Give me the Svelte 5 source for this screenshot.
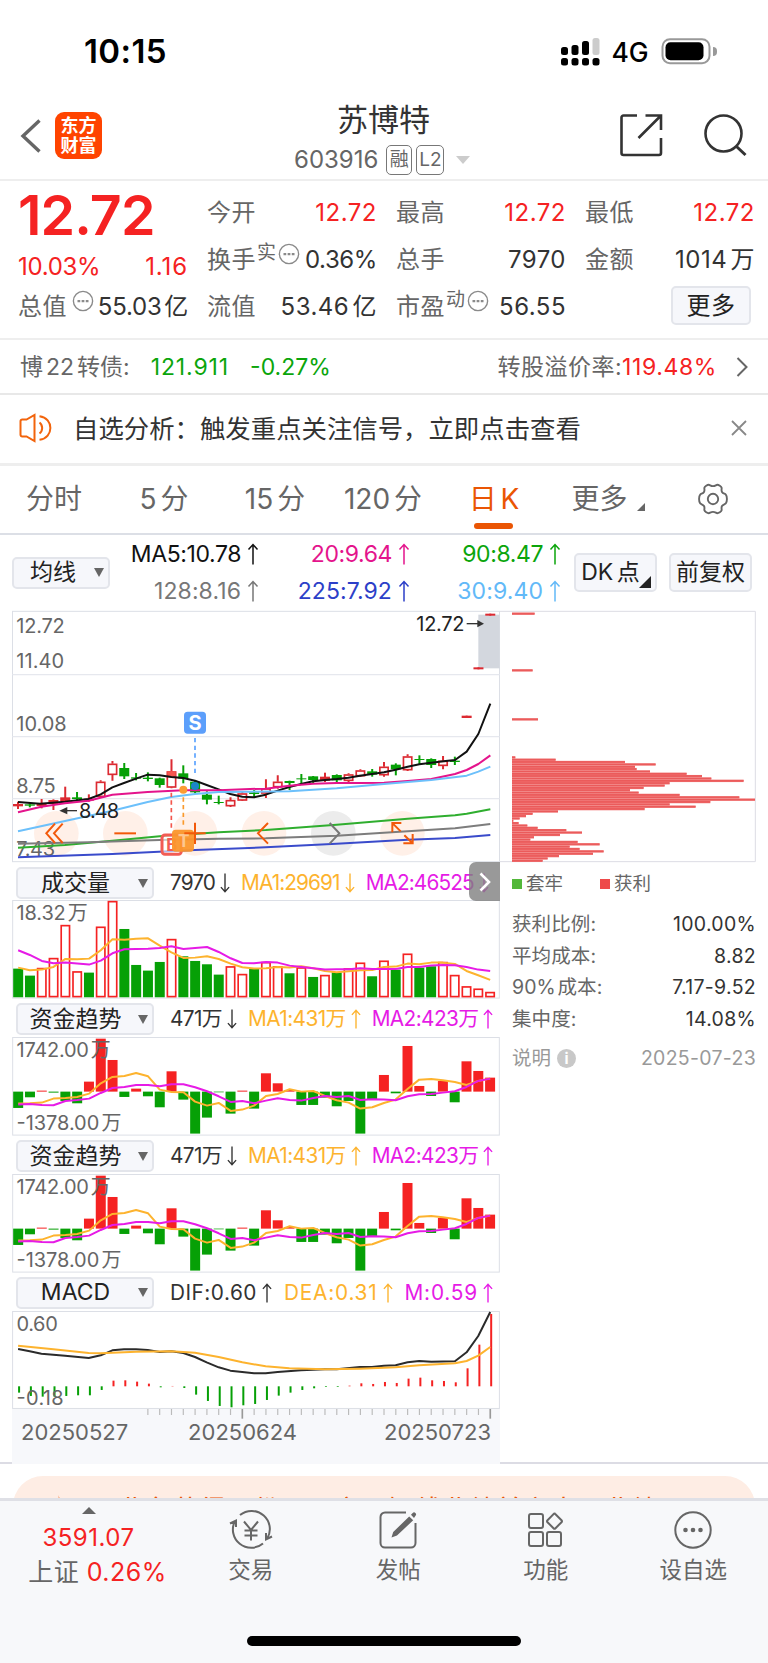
<script lang="ts">
  type Point = [number, number];
  type Candle = [kind: string, top: number, bottom: number, high: number, low: number];
  type Bar = [kind: string, y: number];

  // Charts are drawn in @3x units, one candle every STEP units
  const FIRST = 54;
  const STEP = 35.42;
  const at = (i: number) => FIRST + i * STEP;

  const path = (points: Point[]) => points.map((p) => p.join(',')).join(' ');

  // Series written as "y y y ...", one value per candle
  const series = (text: string): Point[] =>
    text.split(' ').map((y, i) => [Math.round(at(i)), Number(y)]);

  const parseBars = (text: string): Bar[] =>
    text.split(' ').map((item) => [item[0], Number(item.slice(1))]);

  const tabs = ['分时', '5 分', '15 分', '120 分', '日 K'];

  const averages = [
    { text: 'MA5:10.78', color: '#111' },
    { text: '20:9.64', color: '#e4148c' },
    { text: '90:8.47', color: '#0ba50b' },
    { text: '128:8.16', color: '#777' },
    { text: '225:7.92', color: '#2c3fc8' },
    { text: '30:9.40', color: '#62b9f8' }
  ];

  const candles: Candle[] = [
    ['s', 612, 619, 605, 627], ['g', 613, 617, 610, 622], ['s', 611, 618, 597, 625],
    ['s', 600, 612, 598, 630], ['s', 592, 603, 560, 606], ['g', 592, 597, 576, 600],
    ['s', 596, 602, 583, 605], ['r', 545, 590, 541, 592], ['r', 491, 524, 483, 542],
    ['g', 504, 529, 489, 537], ['g', 532, 536, 519, 541], ['g', 533, 537, 517, 544],
    ['g', 535, 555, 533, 563], ['r', 514, 562, 478, 565], ['g', 520, 536, 496, 550],
    ['g', 545, 577, 540, 580], ['g', 584, 599, 574, 613], ['g', 606, 609, 587, 613],
    ['r', 600, 618, 592, 621], ['r', 580, 601, 576, 603], ['g', 577, 582, 570, 592],
    ['r', 565, 580, 538, 594], ['r', 545, 561, 526, 566], ['g', 543, 549, 542, 570],
    ['g', 535, 538, 522, 552], ['g', 529, 540, 528, 552], ['s', 530, 542, 518, 546],
    ['g', 525, 541, 523, 546], ['r', 523, 542, 520, 551], ['r', 511, 528, 508, 530],
    ['g', 514, 524, 507, 530], ['r', 500, 525, 486, 530], ['g', 494, 508, 490, 526],
    ['r', 469, 510, 463, 513], ['g', 477, 480, 466, 493], ['g', 477, 495, 475, 504],
    ['r', 482, 497, 468, 508], ['g', 482, 486, 470, 495], ['s', 347, 354, 347, 354],
    ['s', 202, 208, 202, 208], ['s', 41, 47, 41, 47]
  ];

  const priceLines: { color: string; points: Point[] }[] = [
    { color: '#2fae2f', points: [[54, 743], [195, 735], [337, 722], [479, 709], [656, 697], [797, 690], [1010, 674], [1223, 656], [1365, 646], [1400, 641], [1471, 628]] },
    { color: '#7d7d7d', points: [[54, 731], [266, 727], [479, 720], [656, 716], [797, 715], [1010, 707], [1223, 694], [1365, 685], [1471, 672]] },
    { color: '#3a4bcb', points: [[54, 772], [337, 762], [585, 750], [797, 742], [1010, 731], [1223, 719], [1365, 714], [1471, 705]] },
    { color: '#111', points: [[54, 606], [120, 611], [195, 605], [266, 597], [302, 583], [337, 562], [372, 549], [408, 536], [443, 524], [479, 526], [514, 531], [550, 534], [585, 542], [620, 555], [656, 568], [691, 582], [727, 590], [762, 592], [797, 584], [833, 572], [868, 561], [903, 552], [939, 544], [975, 540], [1010, 537], [1045, 533], [1080, 527], [1116, 522], [1152, 517], [1187, 509], [1223, 500], [1258, 493], [1294, 488], [1330, 484], [1365, 480], [1400, 455], [1435, 402], [1471, 311]] },
    { color: '#e4148c', points: [[54, 637], [124, 620], [195, 610], [266, 602], [337, 584], [443, 576], [550, 571], [656, 571], [750, 567], [797, 566], [868, 557], [939, 551], [1010, 549], [1080, 549], [1152, 548], [1223, 543], [1294, 537], [1365, 522], [1400, 510], [1435, 492], [1471, 466]] },
    { color: '#6cc0fb', points: [[54, 694], [195, 663], [337, 632], [443, 606], [514, 591], [585, 582], [656, 576], [750, 575], [868, 574], [1010, 565], [1152, 552], [1294, 540], [1400, 527], [1435, 515], [1471, 500]] }
  ];

  const chipWidths = [
    46, 167, 375, 467, 405, 410, 450, 560, 606, 634, 731, 509, 494, 431, 390, 416, 539, 718, 765,
    631, 509, 587, 434, 174, 98, 78, 59, 40, 56, 82, 113, 199, 246, 180, 102, 91, 233, 299, 209,
    239, 311, 279, 177, 143, 128
  ];
  const chips: Point[] = [
    [41, 104],
    [211, 98],
    [358, 114],
    ...chipWidths.map((w, i): Point => [472 + i * 7.05, w])
  ];

  const chipStats = [
    ['获利比例:', '100.00%'],
    ['平均成本:', '8.82'],
    ['90% 成本:', '7.17-9.52'],
    ['集中度:', '14.08%']
  ];

  const volumeBars = parseBars(
    'g327 g348 r326 r296 r197 r336 g339 r202 r125 g208 g316 g333 g307 r239 g290 g304 g314 g345 r321 r344 g326 r308 r321 g341 r324 g352 r347 g338 r327 r310 g350 r304 g330 r283 g324 g320 r308 r347 r381 r388 r398'
  );
  const volumeMa1 = series(
    '324 332 330 322 298 299 297 272 239 240 237 236 258 278 295 294 290 298 312 323 327 326 322 324 320 326 334 338 335 332 331 322 321 312 314 309 309 313 334 347 361'
  );
  const volumeMa2 = series(
    '272 286 304 311 309 312 315 303 281 269 268 267 265 260 268 265 262 277 296 310 311 307 309 318 322 326 330 329 329 326 328 328 328 322 322 318 316 317 322 330 334'
  );

  const fundBars = parseBars(
    'g745 g713 r693 g699 g724 g731 r666 r537 r601 g712 r687 g710 g743 r635 g720 g822 g774 g698 g762 r693 g747 r641 r671 r691 g736 g736 g714 g740 g724 g822 g720 r646 g701 r559 r679 g709 r664 g728 r605 r634 r654'
  );
  const fundMa1 = series(
    '732 731 729 717 715 712 702 671 652 649 640 650 690 697 698 726 738 730 754 750 738 709 703 689 696 694 709 722 729 747 743 730 720 688 660 658 662 667 676 664 657'
  );
  const fundMa2 = series(
    '735 733 736 737 724 721 717 700 685 682 676 676 680 674 674 683 695 710 727 724 731 723 716 721 723 715 709 712 709 721 719 720 722 710 704 703 699 695 682 664 657'
  );

  const macdBars = parseBars(
    'g308 g318 g320 g320 g318 g316 g316 g300 r272 r271 r275 r281 g292 r288 g294 g314 g333 g348 g352 g346 g342 g330 g317 g308 g300 g295 g291 g291 r287 r280 r282 r276 r279 r266 r263 r271 r273 r277 r235 r164 r72'
  );
  const dif: Point[] = [[54, 177], [89, 184], [124, 191], [195, 197], [266, 204], [302, 196], [337, 181], [372, 178], [408, 178], [443, 180], [479, 186], [514, 184], [550, 189], [585, 201], [620, 217], [656, 232], [691, 242], [762, 250], [797, 250], [833, 246], [903, 241], [975, 238], [1010, 238], [1080, 231], [1116, 231], [1152, 227], [1187, 226], [1223, 217], [1258, 213], [1294, 215], [1365, 214], [1400, 187], [1435, 138], [1471, 66]];
  const dea: Point[] = [[54, 167], [160, 178], [266, 189], [302, 190], [408, 185], [514, 184], [585, 188], [656, 201], [727, 217], [797, 229], [868, 235], [975, 238], [1080, 236], [1187, 232], [1258, 226], [1365, 220], [1400, 213], [1435, 197], [1471, 171]];

  const ticks = Array.from({ length: 30 }, (_, i) => i + 11);

  const UP = '#f52222';
  const DOWN = '#06a006';
</script>

{#snippet arrow(down = false)}
  <svg class="arrow" class:down viewBox="0 0 12 22" width="12" height="22">
    <path d="M6 21.500V1.500M1.500 6.500L6 1.500l4.500 5" fill="none" stroke="currentColor" stroke-width="1.500" />
  </svg>
{/snippet}

{#snippet info()}
  <svg class="info" viewBox="0 0 24 24" width="22" height="22">
    <circle cx="12" cy="12" r="10.500" fill="none" stroke="#8a8a8a" stroke-width="1.500" />
    <path d="M6 11h3v2.400H6zM10.500 11h3v2.400h-3zM15 11h3v2.400h-3z" fill="#8a8a8a" />
  </svg>
{/snippet}

{#snippet fundPanel()}
  <div class="panel-head">
    <button class="select"><span>资金趋势</span><i></i></button>
    <span class="reading dark">471万{@render arrow(true)}</span>
    <span class="reading orange">MA1:431万{@render arrow()}</span>
    <span class="reading purple">MA2:423万{@render arrow()}</span>
  </div>
  <svg class="panel" viewBox="36 532 1464 296" width="488" height="98.600">
    <rect class="frame" x="37.500" y="533.500" width="1461" height="293" />
    {#each fundBars as [kind, y], i}
      <rect x={at(i) - 15} y={Math.min(y, 696)} width="30" height={Math.abs(696 - y)} fill={kind === 'r' ? UP : DOWN} />
    {/each}
    <text class="axis" x="49" y="591" textLength="283">1742.00 万</text>
    <text class="axis" x="49" y="812" textLength="315">-1378.00 万</text>
    <polyline class="line" points={path(fundMa1)} stroke="#fdb32e" />
    <polyline class="line" points={path(fundMa2)} stroke="#e61be6" />
  </svg>
{/snippet}

<main>
  <div class="status">
    <span class="clock">10:15</span>
    <svg viewBox="0 0 152 30" width="152" height="30">
      <g fill="#000">
        <rect x="2" y="10" width="7" height="8" rx="2.500" />
        <rect x="12.500" y="8" width="7" height="10" rx="2.500" />
        <rect x="23" y="4" width="7" height="14" rx="2.500" />
        <rect x="2" y="21" width="7" height="7.500" rx="2.500" />
        <rect x="12.500" y="21" width="7" height="7.500" rx="2.500" />
        <rect x="23" y="21" width="7" height="7.500" rx="2.500" />
        <rect x="33.500" y="21" width="7" height="7.500" rx="2.500" />
      </g>
      <rect x="33.500" y="1" width="7" height="17" rx="2.500" fill="#ccc" />
      <text x="52.500" y="24.500" font-size="26.500" font-weight="450" textLength="37">4G</text>
      <rect x="103.500" y="2.200" width="47" height="24" rx="7.500" fill="none" stroke="#999" stroke-width="2" />
      <rect x="106.500" y="5.200" width="38" height="18" rx="5" fill="#000" />
    </svg>
    <i class="battery-cap"></i>
  </div>

  <header>
    <svg class="back" viewBox="0 0 22 36" width="22" height="36">
      <path d="M19.500 2.500L3 18l16.500 15.500" fill="none" stroke="#666" stroke-width="3.400" />
    </svg>
    <div class="logo"><span>东方</span><span>财富</span></div>
    <div class="title">
      <h1>苏博特</h1>
      <div class="code">
        <span>603916</span><b>融</b><b>L2</b><i></i>
      </div>
    </div>
    <svg class="share" viewBox="0 0 44 44" width="44" height="44">
      <path d="M18 2.500H4.500a2 2 0 0 0-2 2V40a2 2 0 0 0 2 2H40a2 2 0 0 0 2-2V25M26.500 2.500H42V17M42 2.500L19.500 25" fill="none" stroke="#333" stroke-width="2.600" />
    </svg>
    <svg class="search" viewBox="0 0 44 44" width="44" height="44">
      <circle cx="20.500" cy="20.500" r="18" fill="none" stroke="#333" stroke-width="2.600" />
      <path d="M33 33l9.500 9" stroke="#333" stroke-width="3" />
    </svg>
  </header>

  <section class="quote">
    <div class="col">
      <div class="price">12.72</div>
      <div class="cell second red"><span>10.03%</span><span class="chg">1.16</span></div>
      <div class="cell total"><label>总值</label>{@render info()}<span>55.03 亿</span></div>
    </div>
    <div class="col">
      <div class="cell"><label>今开</label><span class="red">12.72</span></div>
      <div class="cell"><label>换手<sup>实</sup></label>{@render info()}<span class="tight">0.36%</span></div>
      <div class="cell"><label>流值</label><span>53.46 亿</span></div>
    </div>
    <div class="col">
      <div class="cell"><label>最高</label><span class="red">12.72</span></div>
      <div class="cell"><label>总手</label><span>7970</span></div>
      <div class="cell"><label>市盈<sup>动</sup></label>{@render info()}<span>56.55</span></div>
    </div>
    <div class="col">
      <div class="cell"><label>最低</label><span class="red">12.72</span></div>
      <div class="cell"><label>金额</label><span>1014 万</span></div>
      <div class="cell"><button class="more">更多</button></div>
    </div>
  </section>

  <section class="bond">
    <label>博 22 转债:</label>
    <span class="green value">121.911</span>
    <span class="green">-0.27%</span>
    <label class="premium">转股溢价率:</label>
    <span class="red">119.48%</span>
    <svg viewBox="0 0 12 20" width="12" height="20">
      <path d="M1.500 1l9 9-9 9" fill="none" stroke="#666" stroke-width="2" />
    </svg>
  </section>

  <section class="notice">
    <svg viewBox="0 0 34 28" width="34" height="28">
      <g fill="none" stroke="#f2640c" stroke-width="2">
        <path d="M7.500 5.500H3.200a1.700 1.700 0 0 0-1.700 1.700v13.600a1.700 1.700 0 0 0 1.700 1.700h4.300l8 4.500V1z" />
        <path d="M20.500 8.500a7 7 0 0 1 0 11M20.500 2.200c14.500 2 14.500 21.600 0 23.600" />
      </g>
    </svg>
    <p>自选分析：触发重点关注信号，立即点击查看</p>
    <svg viewBox="0 0 16 16" width="16" height="16">
      <path d="M1 1l14 14M15 1L1 15" stroke="#888" stroke-width="1.800" />
    </svg>
  </section>

  <nav class="tabs">
    {#each tabs as tab, i}
      <a href="#top" class:active={i === 4}>{tab}</a>
    {/each}
    <a href="#top" class="dropdown">更多<i></i></a>
    <svg viewBox="0 0 34 32" width="34" height="32">
      <g fill="none" stroke="#666" stroke-width="1.900">
        <path d="M12.700 1.800c1.200 0 2 1.300 4.300 1.300s3.100-1.300 4.300-1.300c1.300 0 4 1.600 4.300 2.900.3 1.200-.6 2.600.4 4.300s2.900 1.600 3.800 2.600c1.500 1.600 1.500 7.200 0 8.800-.9 1-2.800.9-3.800 2.600s-.1 3.100-.4 4.300c-.3 1.300-3 2.900-4.300 2.900-1.200 0-2-1.300-4.300-1.300s-3.100 1.300-4.300 1.300c-1.300 0-4-1.600-4.300-2.900-.3-1.200.6-2.600-.4-4.300s-2.900-1.600-3.800-2.600c-1.500-1.600-1.500-7.200 0-8.800.9-1 2.800-.9 3.800-2.600s.1-3.100.4-4.300c.3-1.300 3-2.900 4.300-2.900z" />
        <circle cx="17" cy="16" r="5.200" />
      </g>
    </svg>
  </nav>

  <section class="ma-bar">
    <button class="select small"><span>均线</span><i></i></button>
    <div class="averages">
      {#each averages as item, i}
        <span class:wide={i > 2} style="color: {item.color}">{item.text}{@render arrow()}</span>
      {/each}
    </div>
    <button class="tool corner">DK 点</button>
    <button class="tool">前复权</button>
  </section>

  <div class="board">
    <div class="charts">
      <svg class="kline" viewBox="36 33 1464 753" width="488" height="251">
        <rect class="frame" x="37.500" y="34" width="1461" height="751" />
        <path d="M37 224H1499M37 410H1499M37 596H1499" stroke="#e6e8ee" stroke-width="4" />
        <rect x="1435" y="44" width="64" height="161" fill="#d3d7de" />

        <g class="pads">
          <circle cx="169" cy="700" r="67" />
          <circle cx="376" cy="700" r="67" />
          <circle cx="585" cy="700" r="67" />
          <circle cx="792" cy="700" r="67" />
          <circle cx="1000" cy="700" r="67" fill="#ececec" />
          <circle cx="1207" cy="700" r="67" />
        </g>

        <text class="axis" x="49" y="99" textLength="145">12.72</text>
        <text class="axis" x="49" y="205" textLength="143">11.40</text>
        <text class="axis" x="49" y="392" textLength="151">10.08</text>
        <text class="axis" x="49" y="578" textLength="118">8.75</text>
        <text class="axis" x="49" y="767" textLength="116">7.43</text>

        {#each candles as [kind, top, bottom, high, low], i}
          {@const color = kind === 'g' ? DOWN : '#dc2a32'}
          {#if kind === 'r'}
            <path d="M{at(i)} {high}V{top}M{at(i)} {bottom}V{low}" stroke={color} stroke-width="6" />
            <rect x={at(i) - 12.500} y={top + 2} width="25" height={bottom - top - 3} fill="none" stroke={color} stroke-width="5" />
          {:else}
            <path d="M{at(i)} {high}V{low}" stroke={color} stroke-width="6" />
            <rect x={at(i) - 15} y={top} width="30" height={bottom - top} fill={color} />
          {/if}
        {/each}
        <rect x="502" y="514" width="25" height="18" fill="#f4574f" />

        {#each priceLines as line}
          <polyline class="line" points={path(line.points)} stroke={line.color} />
        {/each}

        <path d="M585 414V520" stroke="#5aa2ff" stroke-width="5" stroke-dasharray="13 10" />
        <path d="M514 578V690" stroke="#f4564c" stroke-width="5" stroke-dasharray="13 10" />
        <path d="M550 592V680" stroke="#fa9a2c" stroke-width="5" stroke-dasharray="13 10" />
        <circle cx="585" cy="558" r="12" fill="#1c86c8" />
        <circle cx="550" cy="569" r="12" fill="#fb9c34" />

        <rect x="552" y="335" width="66" height="66" rx="11" fill="#5c9ffb" />
        <text class="badge" x="585" y="389" textLength="42">S</text>
        <rect x="486" y="705" width="58" height="58" rx="9" fill="#fff" fill-opacity="0.6" stroke="#f25c54" stroke-width="9" />
        <text class="badge buy" x="515" y="753">B</text>
        <rect x="516" y="689" width="66" height="66" rx="11" fill="#fb962c" fill-opacity="0.95" />
        <text class="badge trade" x="551" y="741">T</text>

        <g class="glyphs">
          <path d="M165 671L139 700l26 29M188 671L162 700l26 29" />
          <path d="M343 700H408" />
          <path d="M585 668V732M553 700H617" />
          <path d="M804 669L774 700l30 31" />
          <path d="M989 669L1018 700l-29 31" stroke="#777" />
          <path d="M1202 694L1178 670M1177 697V669H1204M1213 706L1237 729M1238 702V730H1210" />
        </g>

        <path d="M200 632H231" stroke="#333" stroke-width="4" />
        <path d="M178 632L202 621V643z" fill="#333" />
        <text class="axis mark" x="237" y="655" textLength="120">8.48</text>
        <text class="axis mark" x="1249" y="94" textLength="144">12.72</text>
        <path d="M1400 71H1434" stroke="#333" stroke-width="4" />
        <path d="M1452 71L1432 60V82z" fill="#333" />
      </svg>

      <div class="panel-head volume">
        <button class="select"><span>成交量</span><i></i></button>
        <span class="reading dark">7970{@render arrow(true)}</span>
        <span class="reading orange">MA1:29691{@render arrow(true)}</span>
        <span class="reading purple">MA2:46525{@render arrow(true)}</span>
        <div class="fold">
          <svg viewBox="0 0 12 20" width="12" height="20">
            <path d="M1.500 1.500L10 10l-8.500 8.500" fill="none" stroke="#fff" stroke-width="2.600" />
          </svg>
        </div>
      </div>
      <svg class="panel" viewBox="36 121 1464 296" width="488" height="98.600">
        <rect class="frame" x="37.500" y="122.500" width="1461" height="293" />
        {#each volumeBars as [kind, y], i}
          {#if kind === 'r'}
            <rect x={at(i) - 12.500} y={y + 1} width="25" height={410 - y} fill="#fff" stroke={UP} stroke-width="5" />
          {:else}
            <rect x={at(i) - 15} {y} width="30" height={413 - y} fill={DOWN} />
          {/if}
        {/each}
        <text class="axis" x="49" y="181" textLength="214">18.32 万</text>
        <polyline class="line" points={path(volumeMa1)} stroke="#fdb32e" />
        <polyline class="line" points={path(volumeMa2)} stroke="#e61be6" />
      </svg>

      {@render fundPanel()}
      {@render fundPanel()}

      <div class="panel-head macd">
        <button class="select"><span>MACD</span><i></i></button>
        <span class="reading dark">DIF:0.60{@render arrow()}</span>
        <span class="reading orange">DEA:0.31{@render arrow()}</span>
        <span class="reading purple">M:0.59{@render arrow()}</span>
      </div>
      <svg class="panel" viewBox="36 63 1464 295" width="488" height="98.300">
        <rect class="frame" x="37.500" y="64.500" width="1461" height="291" />
        {#each macdBars as [kind, y], i}
          <rect x={at(i)} y={Math.min(y, 289)} width="6" height={Math.abs(289 - y)} fill={kind === 'r' ? UP : DOWN} />
        {/each}
        <text class="axis" x="49" y="124" textLength="124">0.60</text>
        <text class="axis" x="49" y="344" textLength="142">-0.18</text>
        <polyline class="line" points={path(dif)} stroke="#2b2b2b" />
        <polyline class="line" points={path(dea)} stroke="#fdb32e" />
      </svg>
      <div class="dates">
        <svg viewBox="36 357 1464 32" width="488" height="10.700">
          {#each ticks as i}
            {@const major = i === 19 || i === 40}
            <path d="M{at(i)} 357V{major ? 386 : 375}" stroke={major ? '#999' : '#bbb'} stroke-width={major ? 5 : 3.500} />
          {/each}
        </svg>
        <div><span>20250527</span><span>20250624</span><span>20250723</span></div>
      </div>
    </div>

    <aside>
      <svg viewBox="0 33 768 753" width="256" height="251">
        <path d="M0 34H766V785H0" fill="none" stroke="#dcdce4" stroke-width="3" />
        {#each chips as [y, end]}
          <rect x="36" y={y - 3.500} width={end - 36} height="7.200" fill="#ee6565" />
          <rect x="36" y={y - 1.200} width={end - 36} height="1.800" fill="#e85555" />
        {/each}
      </svg>
      <div class="legend"><i class="stuck"></i>套牢<i class="gain"></i>获利</div>
      {#each chipStats as [label, value]}
        <div class="stat"><label>{label}</label><span>{value}</span></div>
      {/each}
      <div class="stat note">
        <label>说明<em>i</em></label><span>2025-07-23</span>
      </div>
    </aside>
  </div>

  <div class="promo">
    <div>
      <svg viewBox="0 0 26 30" width="26" height="30">
        <path d="M13.500 0c1 7 9 9 9 18a10 10 0 0 1-20 0c0-4 3-6 4-9 2 1 3 3 3 5 3-3 5-8 4-14z" fill="#ea5504" />
      </svg>
      <span>业务获得股份，股市里短线业绩并六大，业绩</span>
    </div>
  </div>

  <footer>
    <div class="index">
      <i></i>
      <span class="red">3591.07</span>
      <div>上证 <span class="red">0.26%</span></div>
    </div>
    <div class="item">
      <svg viewBox="0 0 42 40" width="42" height="40">
        <g fill="none" stroke="#666" stroke-width="2">
          <path d="M10 5A18.300 18.300 0 0 1 37 29M33 33.500A18.300 18.300 0 0 1 5 11M0 13.500l6-3V17M42 26.500l-6 3V23" />
          <path d="M14 11.500l7 8.500 7-8.500M14.500 20.500h13M14.500 25.500h13M21 20v10.500" />
        </g>
      </svg>
      交易
    </div>
    <div class="item">
      <svg viewBox="0 0 40 40" width="40" height="40">
        <path d="M28 2.500H7A4.500 4.500 0 0 0 2.500 7v26A4.500 4.500 0 0 0 7 37.500h26a4.500 4.500 0 0 0 4.500-4.500V13" fill="none" stroke="#666" stroke-width="2" />
        <path d="M31.200 6.500l4 3.800L19 25.500l-5.500 2 1.700-5.500zM33 4.800l1.700-1.900q1.300-1.200 2.700 0t.1 2.900L36 8z" fill="#666" />
      </svg>
      发帖
    </div>
    <div class="item">
      <svg viewBox="0 0 40 40" width="40" height="40">
        <g fill="none" stroke="#666" stroke-width="2">
          <rect x="3" y="4" width="14" height="14" rx="2" />
          <rect x="3" y="22" width="14" height="14" rx="2" />
          <rect x="21" y="22" width="14" height="14" rx="2" />
          <path d="M28.500 3.200l7 7q1 1 0 2l-6 6q-1 1-2 0l-6-6q-1-1 0-2l6-6q.7-1 1.500-.5z" />
        </g>
      </svg>
      功能
    </div>
    <div class="item">
      <svg viewBox="0 0 40 40" width="40" height="40">
        <circle cx="20" cy="20" r="17.700" fill="none" stroke="#666" stroke-width="2" />
        <g fill="#666">
          <circle cx="12.500" cy="20" r="2.300" />
          <circle cx="20" cy="20" r="2.300" />
          <circle cx="27.500" cy="20" r="2.300" />
        </g>
      </svg>
      设自选
    </div>
    <div class="home"></div>
  </footer>
</main>

<style>
  :global(body) {
    background: #fff;
  }

  main {
    width: 768px;
    height: 1663px;
    overflow: hidden;
    font-family: Inter, 'Noto Sans CJK SC', sans-serif;
    font-size: 24px;
    line-height: 1;
    color: #333;
    white-space: nowrap;
  }

  main * {
    box-sizing: border-box;
  }

  main svg {
    display: block;
    flex: none;
    overflow: visible;
  }

  button {
    flex: none;
    padding: 0;
    font: inherit;
    color: #222;
    background: #f6f7fb;
    border: 2px solid #e3e5eb;
    border-radius: 5px;
  }

  .red {
    color: #f52222;
  }

  .green {
    color: #0ba50b;
  }

  .status {
    display: flex;
    align-items: center;
    height: 103px;
    padding-left: 84px;
  }

  .status svg {
    margin-left: auto;
  }

  .clock {
    font-size: 33px;
    font-weight: 600;
    letter-spacing: 0.4px;
    color: #000;
  }

  .battery-cap {
    width: 4px;
    height: 9px;
    margin: 0 51px 0 2px;
    background: #999;
    border-radius: 0 4px 4px 0;
  }

  header {
    display: flex;
    align-items: center;
    height: 78px;
    padding: 0 21px 0 20px;
    border-bottom: 2px solid #eee;
  }

  .back {
    margin-bottom: 10px;
  }

  .logo {
    display: flex;
    flex-direction: column;
    justify-content: center;
    gap: 1px;
    width: 47px;
    height: 47px;
    margin: 0 0 11px 13px;
    font-size: 18px;
    font-weight: 700;
    line-height: 19px;
    text-align: center;
    color: #fff;
    background: #ff4400;
    border-radius: 9px;
  }

  .title {
    width: 190px;
    margin-left: 188px;
  }

  h1 {
    margin: 0;
    padding-left: 47px;
    font-size: 31px;
    font-weight: 400;
    line-height: 37px;
  }

  .code {
    display: flex;
    align-items: center;
    gap: 4px;
    height: 43px;
    padding: 1px 0 0 4px;
    color: #666;
  }

  .code span {
    margin-right: 4px;
    letter-spacing: 0;
  }

  .code b {
    width: 26px;
    height: 30px;
    font-size: 19px;
    font-weight: 400;
    line-height: 27px;
    text-align: center;
    border: 1.5px solid #777;
    border-radius: 5px;
  }

  .code b + b {
    width: 28px;
  }

  .code i {
    margin-left: 8px;
    border: 7px solid transparent;
    border-top: 8px solid #ccc;
    border-bottom: 0;
  }

  .share {
    margin: 0 40px 12px auto;
  }

  .search {
    margin-bottom: 12px;
  }

  .quote {
    display: grid;
    grid-template-columns: 169px 169px 169px 169px;
    column-gap: 20px;
    height: 159px;
    padding: 8px 0 0 19px;
    letter-spacing: 0.5px;
    word-spacing: -4px;
    border-bottom: 2px solid #eee;
  }

  .cell {
    display: flex;
    align-items: center;
    height: 47px;
  }

  .cell label,
  .bond label {
    color: #666;
  }

  .cell label {
    margin-left: -1px;
  }

  .cell > :last-child {
    margin-left: auto;
  }

  .price {
    height: 53px;
    margin-left: -1px;
    font-size: 55.5px;
    font-weight: 600;
    line-height: 52px;
    letter-spacing: -0.9px;
    color: #f52222;
  }

  .cell.second {
    height: 41px;
    padding-top: 8px;
    letter-spacing: -0.3px;
  }

  .second span:first-child {
    margin-left: -1px;
  }

  .chg {
    letter-spacing: 0.9px;
  }

  sup {
    position: relative;
    top: 0;
    margin-left: 1px;
    font-size: 19px;
    line-height: 0;
  }

  .info {
    margin: -11px 0 0 1px;
  }

  .total .info {
    margin-left: 5px;
  }

  .total span {
    letter-spacing: -0.2px;
  }

  .cell .tight {
    letter-spacing: -0.4px;
  }

  .more {
    width: 80px;
    height: 39px;
    margin: -2px 4px 0 0;
    letter-spacing: 0.5px;
  }

  .bond {
    display: flex;
    align-items: center;
    height: 55px;
    padding: 1px 20px 0;
    font-size: 23px;
    word-spacing: -3.5px;
    border-bottom: 2px solid #e8e8e8;
  }

  .bond .green {
    margin-left: 21px;
  }

  .bond .value {
    letter-spacing: 0.9px;
  }

  .bond .premium {
    margin-left: auto;
    letter-spacing: 0.5px;
  }

  .bond .red {
    letter-spacing: 0.6px;
  }

  .bond svg {
    margin-left: 19px;
  }

  .notice {
    display: flex;
    align-items: center;
    height: 71px;
    padding: 0 21px 2px 19px;
    border-bottom: 3px solid #eee;
  }

  .notice p {
    margin: 2px auto 0 20px;
    font-size: 25.4px;
  }

  .tabs {
    display: grid;
    grid-template-columns: 108px 112px 110px 106px 116px 112px 1fr;
    align-items: center;
    height: 69px;
    border-bottom: 2px solid #dcdfe6;
  }

  .tabs a {
    position: relative;
    font-size: 28px;
    line-height: 65px;
    text-align: center;
    word-spacing: -4px;
    color: #666;
    text-decoration: none;
  }

  .tabs .active {
    color: #ea5504;
  }

  .tabs .active::after {
    position: absolute;
    bottom: 3px;
    left: 50%;
    width: 39px;
    height: 6px;
    margin-left: -20px;
    content: '';
    background: #ea5504;
    border-radius: 3px;
  }

  .dropdown i {
    display: inline-block;
    margin-left: 9px;
    vertical-align: -2px;
    border-bottom: 8px solid #666;
    border-left: 8px solid transparent;
  }

  .tabs svg {
    margin: -2px 0 0 32px;
  }

  .ma-bar {
    display: flex;
    align-items: center;
    height: 76px;
    padding: 0 16px 2px 12px;
  }

  .select {
    display: flex;
    align-items: center;
    width: 138px;
    height: 32px;
  }

  .select span {
    flex: 1;
    padding-right: 5px;
    text-align: center;
  }

  .select i {
    margin-right: 4px;
    border: 5px solid transparent;
    border-top: 9px solid #666;
    border-bottom: 0;
  }

  .select.small {
    width: 98px;
    margin-top: 1px;
    font-size: 23px;
  }

  .select.small span {
    padding: 0 0 0 7px;
  }

  .select.small i {
    margin: 0 4px 0 9px;
  }

  .averages {
    display: grid;
    grid-template-columns: 149px 151px 151px;
    padding-top: 1px;
    line-height: 37px;
  }

  .averages span {
    display: flex;
    align-items: center;
    justify-content: flex-end;
    font-size: 23px;
    letter-spacing: -0.4px;
  }

  .averages .wide {
    letter-spacing: 0.1px;
  }

  .averages span :global(.arrow) {
    margin-left: 6px;
  }

  .arrow.down {
    transform: rotate(180deg);
  }

  .tool {
    position: relative;
    width: 83px;
    height: 39px;
    margin-left: auto;
    font-size: 23px;
    word-spacing: -3px;
  }

  .tool.corner {
    padding-right: 9px;
  }

  .tool.corner::after {
    position: absolute;
    right: 4px;
    bottom: 2px;
    content: '';
    border-bottom: 12px solid #222;
    border-left: 12px solid transparent;
  }

  .board {
    display: flex;
    height: 853px;
    padding-left: 12px;
    border-bottom: 2px solid #dcdce4;
  }

  .charts {
    width: 488px;
  }

  .frame {
    fill: none;
    stroke: #dcdfe6;
    stroke-width: 3;
  }

  .line {
    fill: none;
    stroke-width: 6;
    stroke-linejoin: round;
  }

  .axis {
    font-size: 60px;
    fill: #666;
    word-spacing: -10px;
  }

  .mark {
    fill: #222;
  }

  .badge {
    font-size: 60px;
    font-weight: 700;
    text-anchor: middle;
    fill: #fff;
  }

  .buy {
    font-size: 50px;
    fill: #f25c54;
  }

  .trade {
    font-size: 52px;
    fill: #fdc78f;
  }

  .pads {
    fill: #fff0e8;
  }

  .glyphs {
    fill: none;
    stroke: #f2590a;
    stroke-width: 6;
  }

  .panel-head {
    display: flex;
    align-items: center;
    height: 38.2px;
    padding: 3px 4px 0;
  }

  .panel-head .select {
    margin-right: 16px;
    font-size: 23px;
  }

  .volume {
    position: relative;
    padding-top: 4px;
  }

  .fold {
    position: absolute;
    top: 0;
    right: 0;
    display: flex;
    align-items: center;
    justify-content: center;
    width: 31px;
    height: 39px;
    background: rgba(128, 128, 128, 0.8);
    border-radius: 7px 0 0 7px;
  }

  .reading {
    display: flex;
    align-items: center;
    margin-right: 10px;
    font-size: 20.8px;
    letter-spacing: -0.6px;
  }

  .volume .reading {
    letter-spacing: -0.9px;
  }

  .macd .reading {
    letter-spacing: 0.5px;
  }

  .macd .reading + .reading {
    margin-left: 1px;
    letter-spacing: 0.8px;
  }

  .reading :global(.arrow) {
    height: 20px;
    margin-left: 4px;
  }

  .dark {
    color: #333;
  }

  .orange {
    color: #fdb32e;
  }

  .purple {
    color: #e61be6;
  }

  .dates {
    height: 55px;
    background: #f7f8fb;
  }

  .dates div {
    display: flex;
    padding: 1px 9px 0;
    font-size: 22px;
    color: #666;
  }

  .dates span {
    margin-right: auto;
  }

  .dates span:nth-child(2) {
    margin-right: 87px;
  }

  .dates span:last-child {
    margin-right: 0;
  }

  aside {
    width: 256px;
  }

  .legend {
    display: flex;
    align-items: center;
    height: 45px;
    padding: 0 0 2px 12px;
    font-size: 18.5px;
    color: #666;
  }

  .legend i {
    width: 10px;
    height: 10px;
    margin-right: 4px;
    background: #53b83a;
  }

  .legend .gain {
    margin-left: 37px;
    background: #ee4a4a;
  }

  .stat {
    display: flex;
    align-items: center;
    justify-content: space-between;
    height: 31.6px;
    padding: 4px 0 0 12px;
    font-size: 19.5px;
    letter-spacing: 0.3px;
    word-spacing: -4px;
  }

  .stat label {
    display: flex;
    color: #666;
    letter-spacing: 0.1px;
  }

  .note {
    height: 46px;
    color: #999;
  }

  .stat.note label {
    color: #999;
  }

  em {
    width: 19px;
    height: 19px;
    margin-left: 6px;
    font-size: 15px;
    font-style: normal;
    font-weight: 700;
    line-height: 19px;
    text-align: center;
    color: #fff;
    background: #c8c8c8;
    border-radius: 50%;
  }

  .promo {
    height: 34px;
    padding: 12px 13px 0;
    overflow: hidden;
  }

  .promo div {
    display: flex;
    height: 60px;
    padding: 19px 0 0 32px;
    font-size: 27px;
    color: #ea5504;
    background: #feede4;
    border-radius: 30px;
  }

  .promo span {
    margin: 0 0 0 47px;
    line-height: 32px;
  }

  footer {
    position: relative;
    display: grid;
    grid-template-columns: 177px repeat(4, 147.5px);
    height: 166px;
    font-size: 22.5px;
    color: #666;
    background: #f7f8fa;
    border-top: 3px solid #dfe0e6;
  }

  .index {
    display: flex;
    flex-direction: column;
    align-items: center;
    padding: 6px 0 0 18px;
  }

  .index i {
    margin: 0 18px 12px 0;
    border: 7px solid transparent;
    border-top: 0;
    border-bottom: 7px solid #666;
  }

  .index > span {
    margin-right: 18px;
    font-size: 24px;
    letter-spacing: 0.5px;
  }

  .index div {
    margin-top: 10px;
    font-size: 25px;
    letter-spacing: 0.5px;
  }

  .item {
    display: flex;
    flex-direction: column;
    align-items: center;
    gap: 9px;
    padding-top: 9px;
  }

  .home {
    position: absolute;
    bottom: 18px;
    left: 247px;
    width: 274px;
    height: 10px;
    background: #000;
    border-radius: 5px;
  }
</style>
